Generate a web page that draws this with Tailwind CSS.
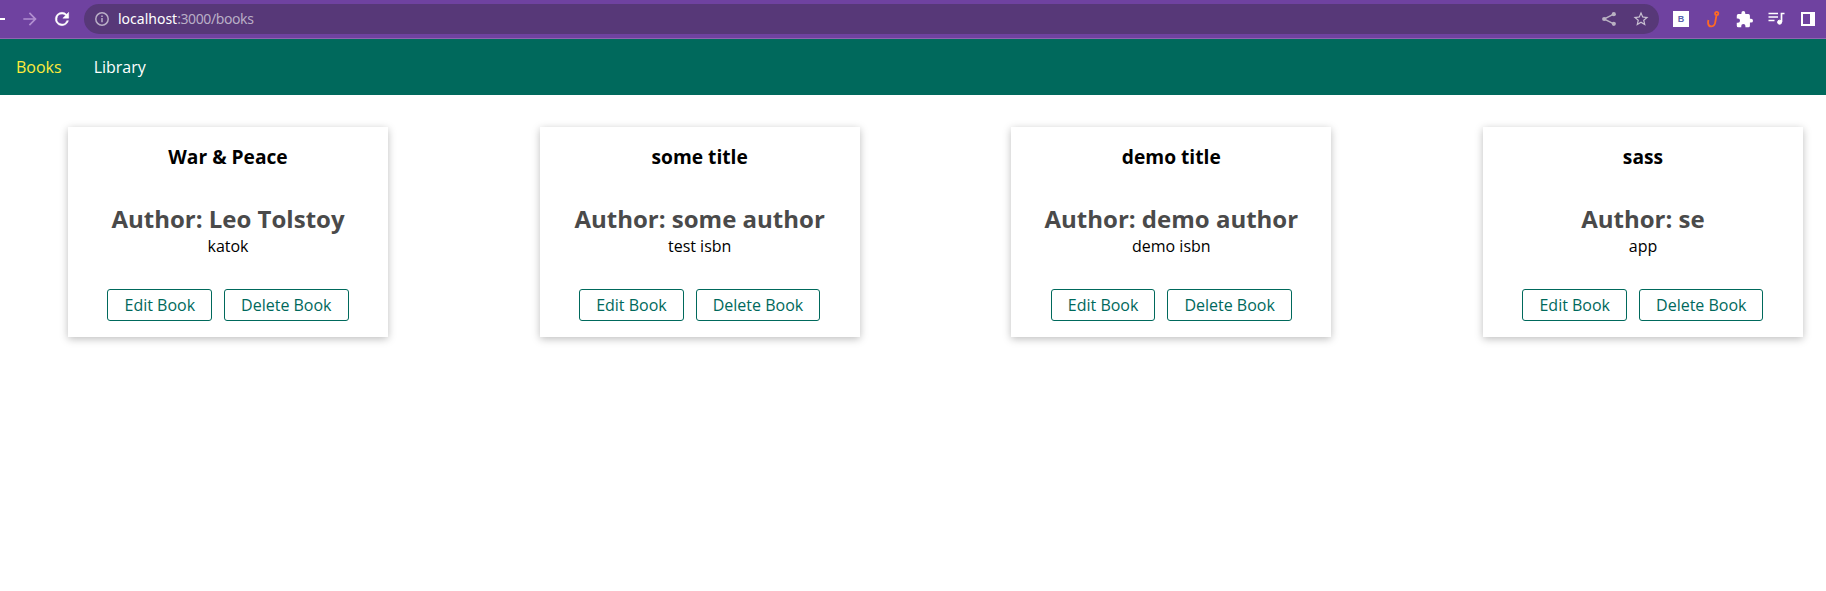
<!DOCTYPE html>
<html lang="en">
<head>
<meta charset="utf-8">
<title>Books</title>
<script src="https://cdn.jsdelivr.net/npm/@tailwindcss/browser@4"></script>
</head>
<body class="h-[591px] overflow-hidden bg-white font-['Open_Sans','Noto_Sans',sans-serif] text-base text-black">
<div class="flex h-[39px] items-start border-b border-[#9165b0] bg-[#6f42a0]">
  <div class="flex h-[38px] w-[84px] shrink-0 items-center text-white">
    <svg class="h-5 w-[5px]" viewBox="0 0 5 20"><path d="M0 10h5" stroke="#fff" stroke-width="2"/></svg>
    <svg class="ml-[15px] size-5 text-[#b18fd0]" viewBox="0 0 24 24" fill="currentColor"><path d="M12 4l-1.41 1.41L16.17 11H4v2h12.17l-5.58 5.59L12 20l8-8z"/></svg>
    <svg class="ml-[12px] size-5" viewBox="0 0 24 24" fill="currentColor"><path d="M17.65 6.35A7.96 7.96 0 0 0 12 4a8 8 0 1 0 7.73 10h-2.08A6 6 0 1 1 12 6c1.66 0 3.14.69 4.22 1.78L13 11h7V4z" stroke="currentColor" stroke-width=".6"/></svg>
  </div>
  <div class="mt-1 flex h-[30px] w-[1575px] shrink-0 items-center rounded-full bg-[#573878] pr-[10px] pl-[10px]">
    <svg class="size-4 text-[#b9aec6]" viewBox="0 0 16 16" fill="none" stroke="currentColor" stroke-width="1.5"><circle cx="8" cy="8" r="6.2"/><path d="M8 7v4.3M8 4.4v1.5"/></svg>
    <div class="ml-2 flex-1 font-['Noto_Sans',sans-serif] text-[14px] leading-5 whitespace-nowrap text-[#b9aec6]"><span class="text-white">localhost</span><span class="tracking-[-0.4px]">:3000/books</span></div>
    <svg class="size-4 text-[#b9b1c2]" viewBox="0 0 16 16" fill="currentColor"><path d="M12.800 3.200L3 8l9.800 4.800" fill="none" stroke="currentColor" stroke-width="1.4"/><circle cx="12.8" cy="3.2" r="2.100"/><circle cx="3.2" cy="8" r="2.100"/><circle cx="12.8" cy="12.8" r="2.100"/></svg>
    <svg class="-mr-px ml-[15px] size-[18px] text-[#c9c1d2]" viewBox="0 0 24 24" fill="currentColor"><path d="M22 9.24l-7.19-.62L12 2 9.19 8.63 2 9.24l5.46 4.73L5.82 21 12 17.27 18.18 21l-1.63-7.03zM12 15.4l-3.76 2.27 1-4.28-3.32-2.88 4.38-.38L12 6.1l1.71 4.04 4.38.38-3.32 2.88 1 4.28z"/></svg>
  </div>
  <div class="flex h-[38px] items-center pl-[14px] text-white">
    <div class="flex size-4 items-center justify-center bg-white font-['Liberation_Sans',sans-serif] text-[9px] leading-none font-bold text-[#5864ae]">B</div>
    <svg class="ml-[16px] h-[18px] w-4" viewBox="0 0 16 18" fill="none" stroke="#ff6a22" stroke-width="1.8"><circle cx="11.7" cy="3.5" r="1.6"/><path d="M11.500 5.100L10.300 12C9.600 17.600 3.700 17.600 3.100 13.500Q2.900 12 3.400 10"/></svg>
    <svg class="ml-[15px] size-[17px]" viewBox="1 1 22 22" fill="currentColor"><path d="M20.5 11H19V7a2 2 0 0 0-2-2h-4V3.500a2.500 2.500 0 0 0-5 0V5H4a2 2 0 0 0-1.990 2v3.800H3.500a2.700 2.700 0 0 1 0 5.400H2V20a2 2 0 0 0 2 2h3.800v-1.500a2.700 2.700 0 0 1 5.400 0V22H17a2 2 0 0 0 2-2v-4h1.500a2.500 2.500 0 0 0 0-5z"/></svg>
    <svg class="ml-[15px] h-4 w-[17px]" viewBox="0 0 17 16" fill="none" stroke="currentColor" stroke-width="1.7"><path d="M.5 2.500h9.500M.5 6h9.500M.5 9.500h6M16.500 2.500H13.500v8.500"/><circle cx="11.600" cy="11.200" r="2" fill="currentColor" stroke-width="1"/></svg>
    <svg class="ml-[16px] size-[14px]" viewBox="0 0 14 14"><path fill="#fff" fill-rule="evenodd" d="M0 0h14v14H0zM2 2v10h7V2z"/></svg>
  </div>
</div>
<nav class="flex h-14 items-center gap-8 bg-[#00695c] px-4 leading-[22px]">
  <a class="text-[#ffeb3b]">Books</a>
  <a class="text-white">Library</a>
</nav>
<main class="flex justify-between pt-8 pr-[23px] pl-[68px] text-center">
  <article class="h-[210px] w-80 bg-white pt-4 shadow-[0_2px_8px_rgba(0,0,0,0.26)]">
    <h3 class="text-[19.2px] leading-[27px] font-bold">War &amp; Peace</h3>
    <h2 class="mt-8 text-2xl leading-[33px] font-bold text-[#4a4a4a]">Author: Leo Tolstoy</h2>
    <p class="leading-[22px]">katok</p>
    <div class="mt-8 flex justify-center gap-3 text-[#00695c]"><button class="rounded-[3px] border border-[#00695c] px-4 py-1 leading-[22px]">Edit Book</button><button class="rounded-[3px] border border-[#00695c] px-4 py-1 leading-[22px]">Delete Book</button></div>
  </article>
  <article class="h-[210px] w-80 bg-white pt-4 shadow-[0_2px_8px_rgba(0,0,0,0.26)]">
    <h3 class="text-[19.2px] leading-[27px] font-bold">some title</h3>
    <h2 class="mt-8 text-2xl leading-[33px] font-bold text-[#4a4a4a]">Author: some author</h2>
    <p class="leading-[22px]">test isbn</p>
    <div class="mt-8 flex justify-center gap-3 text-[#00695c]"><button class="rounded-[3px] border border-[#00695c] px-4 py-1 leading-[22px]">Edit Book</button><button class="rounded-[3px] border border-[#00695c] px-4 py-1 leading-[22px]">Delete Book</button></div>
  </article>
  <article class="h-[210px] w-80 bg-white pt-4 shadow-[0_2px_8px_rgba(0,0,0,0.26)]">
    <h3 class="text-[19.2px] leading-[27px] font-bold">demo title</h3>
    <h2 class="mt-8 text-2xl leading-[33px] font-bold text-[#4a4a4a]">Author: demo author</h2>
    <p class="leading-[22px]">demo isbn</p>
    <div class="mt-8 flex justify-center gap-3 text-[#00695c]"><button class="rounded-[3px] border border-[#00695c] px-4 py-1 leading-[22px]">Edit Book</button><button class="rounded-[3px] border border-[#00695c] px-4 py-1 leading-[22px]">Delete Book</button></div>
  </article>
  <article class="h-[210px] w-80 bg-white pt-4 shadow-[0_2px_8px_rgba(0,0,0,0.26)]">
    <h3 class="text-[19.2px] leading-[27px] font-bold">sass</h3>
    <h2 class="mt-8 text-2xl leading-[33px] font-bold text-[#4a4a4a]">Author: se</h2>
    <p class="leading-[22px]">app</p>
    <div class="mt-8 flex justify-center gap-3 text-[#00695c]"><button class="rounded-[3px] border border-[#00695c] px-4 py-1 leading-[22px]">Edit Book</button><button class="rounded-[3px] border border-[#00695c] px-4 py-1 leading-[22px]">Delete Book</button></div>
  </article>
</main>
</body>
</html>
